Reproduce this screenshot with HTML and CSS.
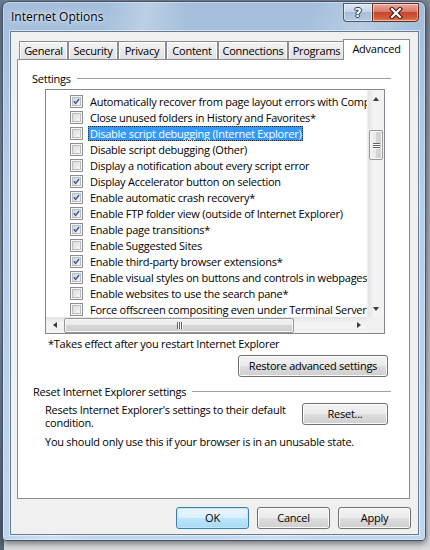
FILE: index.html
```html
<!DOCTYPE html>
<html>
<head>
<meta charset="utf-8">
<title>Internet Options</title>
<link rel="stylesheet" href="styles.css">
</head>
<body>
<div class="desk-strip"></div>
<div class="window">
  <div class="titlebar">
    <span class="title">Internet Options</span>
    <div class="caption-buttons">
      <div class="cap help"><span>?</span></div>
      <div class="cap close">
        <svg width="14" height="12" viewBox="0 0 14 12"><path d="M3 2 L11 10 M11 2 L3 10" stroke="#3b1a12" stroke-width="4.2" stroke-linecap="square"/><path d="M3 2 L11 10 M11 2 L3 10" stroke="#ffffff" stroke-width="2.2" stroke-linecap="square"/></svg>
      </div>
    </div>
  </div>
  <div class="client">
    <div class="tabs">
      <div class="tab t1">General</div>
      <div class="tab t2">Security</div>
      <div class="tab t3">Privacy</div>
      <div class="tab t4">Content</div>
      <div class="tab t5">Connections</div>
      <div class="tab t6">Programs</div>
      <div class="tab selected">Advanced</div>
    </div>
    <div class="panel">
      <div class="group-head settings-head"><span class="gh-text">Settings</span><span class="rule"></span></div>
      <div class="listbox">
        <div class="list-main">
          <div class="viewport">
            <div class="row"><span class="cb checked"><svg width="11" height="11" viewBox="0 0 11 11"><path d="M2.3 5.3 L4.4 7.8 L8.6 2.4" fill="none" stroke="#3d5b8f" stroke-width="1.9"/></svg></span><span class="label">Automatically recover from page layout errors with Compatibility View</span></div>
            <div class="row"><span class="cb"></span><span class="label">Close unused folders in History and Favorites*</span></div>
            <div class="row"><span class="cb"></span><span class="label sel">Disable script debugging (Internet Explorer)</span></div>
            <div class="row"><span class="cb"></span><span class="label">Disable script debugging (Other)</span></div>
            <div class="row"><span class="cb"></span><span class="label">Display a notification about every script error</span></div>
            <div class="row"><span class="cb checked"><svg width="11" height="11" viewBox="0 0 11 11"><path d="M2.3 5.3 L4.4 7.8 L8.6 2.4" fill="none" stroke="#3d5b8f" stroke-width="1.9"/></svg></span><span class="label">Display Accelerator button on selection</span></div>
            <div class="row"><span class="cb checked"><svg width="11" height="11" viewBox="0 0 11 11"><path d="M2.3 5.3 L4.4 7.8 L8.6 2.4" fill="none" stroke="#3d5b8f" stroke-width="1.9"/></svg></span><span class="label">Enable automatic crash recovery*</span></div>
            <div class="row"><span class="cb checked"><svg width="11" height="11" viewBox="0 0 11 11"><path d="M2.3 5.3 L4.4 7.8 L8.6 2.4" fill="none" stroke="#3d5b8f" stroke-width="1.9"/></svg></span><span class="label">Enable FTP folder view (outside of Internet Explorer)</span></div>
            <div class="row"><span class="cb checked"><svg width="11" height="11" viewBox="0 0 11 11"><path d="M2.3 5.3 L4.4 7.8 L8.6 2.4" fill="none" stroke="#3d5b8f" stroke-width="1.9"/></svg></span><span class="label">Enable page transitions*</span></div>
            <div class="row"><span class="cb"></span><span class="label">Enable Suggested Sites</span></div>
            <div class="row"><span class="cb checked"><svg width="11" height="11" viewBox="0 0 11 11"><path d="M2.3 5.3 L4.4 7.8 L8.6 2.4" fill="none" stroke="#3d5b8f" stroke-width="1.9"/></svg></span><span class="label">Enable third-party browser extensions*</span></div>
            <div class="row"><span class="cb checked"><svg width="11" height="11" viewBox="0 0 11 11"><path d="M2.3 5.3 L4.4 7.8 L8.6 2.4" fill="none" stroke="#3d5b8f" stroke-width="1.9"/></svg></span><span class="label">Enable visual styles on buttons and controls in webpages</span></div>
            <div class="row"><span class="cb"></span><span class="label">Enable websites to use the search pane*</span></div>
            <div class="row"><span class="cb"></span><span class="label">Force offscreen compositing even under Terminal Server*</span></div>
          </div>
          <div class="vscroll">
            <div class="sb-btn"><span class="arr up"></span></div>
            <div class="v-track">
              <div class="v-thumb"><span class="grip-h"></span><span class="grip-h"></span><span class="grip-h"></span></div>
            </div>
            <div class="sb-btn"><span class="arr down"></span></div>
          </div>
        </div>
        <div class="hscroll-row">
          <div class="hscroll">
            <div class="sb-btn h"><span class="arr left"></span></div>
            <div class="h-track">
              <div class="h-thumb"><span class="grip-v"></span><span class="grip-v"></span><span class="grip-v"></span></div>
            </div>
            <div class="sb-btn h"><span class="arr right"></span></div>
          </div>
          <div class="corner"></div>
        </div>
      </div>
      <div class="note">*Takes effect after you restart Internet Explorer</div>
      <div class="restore-row"><button class="btn restore">Restore advanced settings</button></div>
      <div class="group-head reset-head"><span class="gh-text">Reset Internet Explorer settings</span><span class="rule"></span></div>
      <div class="reset-row">
        <p class="reset-text"><span class="line">Resets Internet Explorer's settings to their default</span><span class="line">condition.</span></p>
        <button class="btn reset">Reset...</button>
      </div>
      <p class="warn">You should only use this if your browser is in an unusable state.</p>
    </div>
    <div class="footer">
      <button class="btn default">OK</button>
      <button class="btn">Cancel</button>
      <button class="btn">Apply</button>
    </div>
  </div>
</div>
</body>
</html>
```

FILE: styles.css
```css
* { box-sizing: border-box; }
html, body { margin: 0; padding: 0; }
body {
  width: 430px;
  height: 550px;
  overflow: hidden;
  position: relative;
  background: linear-gradient(#7d8896, #b9bfc6 60%, #d9dcdf);
  font-family: "Open Sans", "Noto Sans", sans-serif;
  font-size: 11px;
  letter-spacing: -0.25px;
  color: #000;
}
.desk-strip {
  position: absolute;
  left: 0; top: 0;
  width: 4px; height: 550px;
  background: linear-gradient(#6b7f99, #8ea3bb 50%, #56657a);
}
.window {
  position: absolute;
  left: 2px;
  top: 1px;
  width: 424px;
  height: 540px;
  border: 1px solid #44556a;
  border-radius: 7px 7px 4px 4px;
  background:
    linear-gradient(100deg, rgba(255,255,255,0) 20%, rgba(255,255,255,0.25) 28%, rgba(255,255,255,0) 36%, rgba(255,255,255,0) 60%, rgba(255,255,255,0.22) 70%, rgba(255,255,255,0) 80%),
    linear-gradient(#a4bedb, #b7cfe8 40%, #bfd6ee);
  box-shadow: 0 0 0 1px rgba(255,255,255,0.35) inset, 0 2px 7px rgba(0,0,0,0.55);
  display: flex;
  flex-direction: column;
}
.titlebar {
  height: 29px;
  display: flex;
  align-items: flex-start;
  padding-left: 8px;
}
.title {
  margin-top: 7px;
  font-size: 12px;
  line-height: 16px;
  letter-spacing: 0;
  color: #000;
  text-shadow: 0 0 6px rgba(255,255,255,0.9), 0 0 3px rgba(255,255,255,0.8);
}
.caption-buttons {
  margin-left: auto;
  margin-top: 1px;
  margin-right: 6px;
  display: flex;
}
.cap {
  height: 19px;
  display: flex;
  align-items: center;
  justify-content: center;
  border: 1px solid #4b5b70;
  box-shadow: inset 0 0 0 1px rgba(255,255,255,0.45);
}
.help {
  width: 29px;
  border-right: none;
  border-radius: 0 0 0 4px;
  background: linear-gradient(#dbe6f2, #c5d5e8 45%, #a9bdd5 50%, #b9cbe0);
}
.help span {
  font-family: "DejaVu Sans", sans-serif;
  font-weight: bold;
  font-size: 13px;
  line-height: 13px;
  letter-spacing: 0;
  color: #fff;
  text-shadow: 1px 0 0 #283545, -1px 0 0 #283545, 0 1px 0 #283545, 0 -1px 0 #283545;
}
.close {
  width: 47px;
  border-color: #6a2b20;
  border-radius: 0 0 4px 0;
  background: linear-gradient(#e9a99b, #d9786a 45%, #c7452e 50%, #d0603f 85%, #e28a5d);
}
.client {
  flex: 1;
  margin: 0 6px 5px 7px;
  background: #f0f0f0;
  border: 1px solid #687c94;
  box-shadow: 0 0 0 1px rgba(255,255,255,0.5);
  display: flex;
  flex-direction: column;
}
.tabs {
  margin-top: 7px;
  margin-left: 8px;
  height: 20px;
  display: flex;
  align-items: flex-end;
}
.tab {
  height: 18px;
  border: 1px solid #898c95;
  border-bottom: none;
  background: linear-gradient(#f4f4f4, #e9e9e9 50%, #e0e0e0);
  box-shadow: inset 1px 1px 0 #fdfdfd, inset -1px 0 0 #fdfdfd;
  text-align: center;
  line-height: 17px;
  white-space: nowrap;
}
.t1 { width: 49px; }
.t2 { width: 50px; }
.t3 { width: 48px; }
.t4 { width: 52px; }
.t5 { width: 70px; }
.t6 { width: 57px; }
.tab.selected {
  width: 67px;
  height: 21px;
  margin-left: -2px;
  margin-bottom: -1px;
  background: #fff;
  box-shadow: none;
  position: relative;
  z-index: 1;
  line-height: 17px;
}
.panel {
  margin-left: 6px;
  width: 393px;
  height: 440px;
  background: #fff;
  border: 1px solid #898c95;
}
.group-head {
  display: flex;
  align-items: center;
  height: 15px;
  line-height: 15px;
}
.gh-text { white-space: nowrap; }
.rule {
  flex: 1;
  height: 1px;
  margin-left: 6px;
  background: #a0a0a0;
}
.settings-head {
  margin: 11px 18px 0 14px;
}
.listbox {
  margin: 3px 0 0 27px;
  width: 340px;
  height: 245px;
  border: 1px solid #828790;
  display: flex;
  flex-direction: column;
}
.list-main {
  flex: 1;
  display: flex;
  min-height: 0;
}
.viewport {
  flex: 1;
  overflow: hidden;
  padding-top: 3px;
}
.row {
  height: 16px;
  display: flex;
  align-items: center;
  padding-left: 24px;
  white-space: nowrap;
}
.cb {
  flex: none;
  width: 13px;
  height: 13px;
  border: 1px solid #8e8f8f;
  padding: 1px;
  margin-right: 5px;
  display: flex;
  align-items: center;
  justify-content: center;
  background: linear-gradient(135deg, #cdd0d4, #eceef0 60%, #fbfbfb);
  box-shadow: inset 0 0 0 1px #f6f6f6, inset 0 0 0 2px #b9bcc0;
}
.cb.checked {
  background: linear-gradient(135deg, #c7cdd8, #e8ecf2 60%, #fbfbfb);
}
.label {
  padding: 0 2px;
  height: 15px;
  line-height: 15px;
}
.label.sel {
  background: #3399ff;
  color: #fff;
  outline: 1px dotted #1b2a3a;
  outline-offset: -1px;
}
.vscroll {
  width: 17px;
  flex: none;
  display: flex;
  flex-direction: column;
  background: linear-gradient(to right, #e4e4e4, #f4f4f4 40%, #f1f1f1);
  border-left: 1px solid #efefef;
}
.sb-btn {
  height: 17px;
  flex: none;
  display: flex;
  align-items: center;
  justify-content: center;
}
.sb-btn.h { width: 17px; height: 16px; }
.arr { width: 0; height: 0; }
.arr.up { border-left: 3px solid transparent; border-right: 3px solid transparent; border-bottom: 4px solid #3b3b3b; }
.arr.down { border-left: 3px solid transparent; border-right: 3px solid transparent; border-top: 4px solid #3b3b3b; }
.arr.left { border-top: 3px solid transparent; border-bottom: 3px solid transparent; border-right: 4px solid #3b3b3b; }
.arr.right { border-top: 3px solid transparent; border-bottom: 3px solid transparent; border-left: 4px solid #3b3b3b; }
.v-track {
  flex: 1;
  padding-top: 23px;
}
.v-thumb {
  margin: 0 1px;
  height: 30px;
  border: 1px solid #979797;
  border-radius: 2px;
  background: linear-gradient(to right, #f2f2f2, #e9e9e9 50%, #d6d6d6 50%, #cfcfcf);
  box-shadow: inset 0 0 0 1px #f8f8f8;
  display: flex;
  flex-direction: column;
  align-items: center;
  justify-content: center;
  gap: 1px;
}
.grip-h { width: 7px; height: 1px; background: #606060; box-shadow: 0 1px 0 #fbfbfb; }
.hscroll-row {
  height: 16px;
  flex: none;
  display: flex;
}
.hscroll {
  flex: 1;
  display: flex;
  background: linear-gradient(#e4e4e4, #f4f4f4 40%, #f1f1f1);
}
.h-track {
  flex: 1;
  padding-left: 1px;
  display: flex;
  align-items: center;
}
.h-thumb {
  width: 230px;
  height: 15px;
  border: 1px solid #979797;
  border-radius: 2px;
  background: linear-gradient(#f2f2f2, #e9e9e9 50%, #d6d6d6 50%, #cfcfcf);
  box-shadow: inset 0 0 0 1px #f8f8f8;
  display: flex;
  align-items: center;
  justify-content: center;
  gap: 1px;
}
.grip-v { width: 1px; height: 7px; background: #606060; box-shadow: 1px 0 0 #fbfbfb; }
.corner { width: 17px; background: #f0f0f0; }
.note {
  margin: 2px 0 0 30px;
  line-height: 15px;
}
.restore-row {
  margin-top: 4px;
  padding-left: 220px;
}
.btn {
  height: 22px;
  padding: 0;
  font: inherit;
  letter-spacing: -0.25px;
  color: #000;
  border: 1px solid #707070;
  border-radius: 3px;
  background: linear-gradient(#f2f2f2, #ebebeb 50%, #dddddd 50%, #cfcfcf);
  box-shadow: inset 0 0 0 1px #fbfbfb;
  line-height: 18px;
}
.restore { width: 150px; display: block; }
.reset-head {
  margin: 7px 18px 0 15px;
}
.reset-row {
  margin-top: 4px;
  margin-left: 27px;
  display: flex;
  align-items: flex-start;
}
.reset-text {
  margin: 0;
  width: 257px;
  white-space: nowrap;
  display: flex;
  flex-direction: column;
}
.reset-text .line {
  display: block;
  height: 13px;
  line-height: 13px;
}
.reset { width: 86px; flex: none; }
.warn {
  margin: 6px 0 0 27px;
  line-height: 13px;
}
.footer {
  margin-top: 8px;
  padding-right: 7px;
  display: flex;
  justify-content: flex-end;
  gap: 8px;
}
.footer .btn { width: 73px; }
.btn.default {
  border-color: #3c7fb1;
  background: linear-gradient(#eaf6fd, #d9f0fc 50%, #bee6fd 50%, #a7d9f5);
  box-shadow: inset 0 0 0 1px #c5e5f8;
}
```
